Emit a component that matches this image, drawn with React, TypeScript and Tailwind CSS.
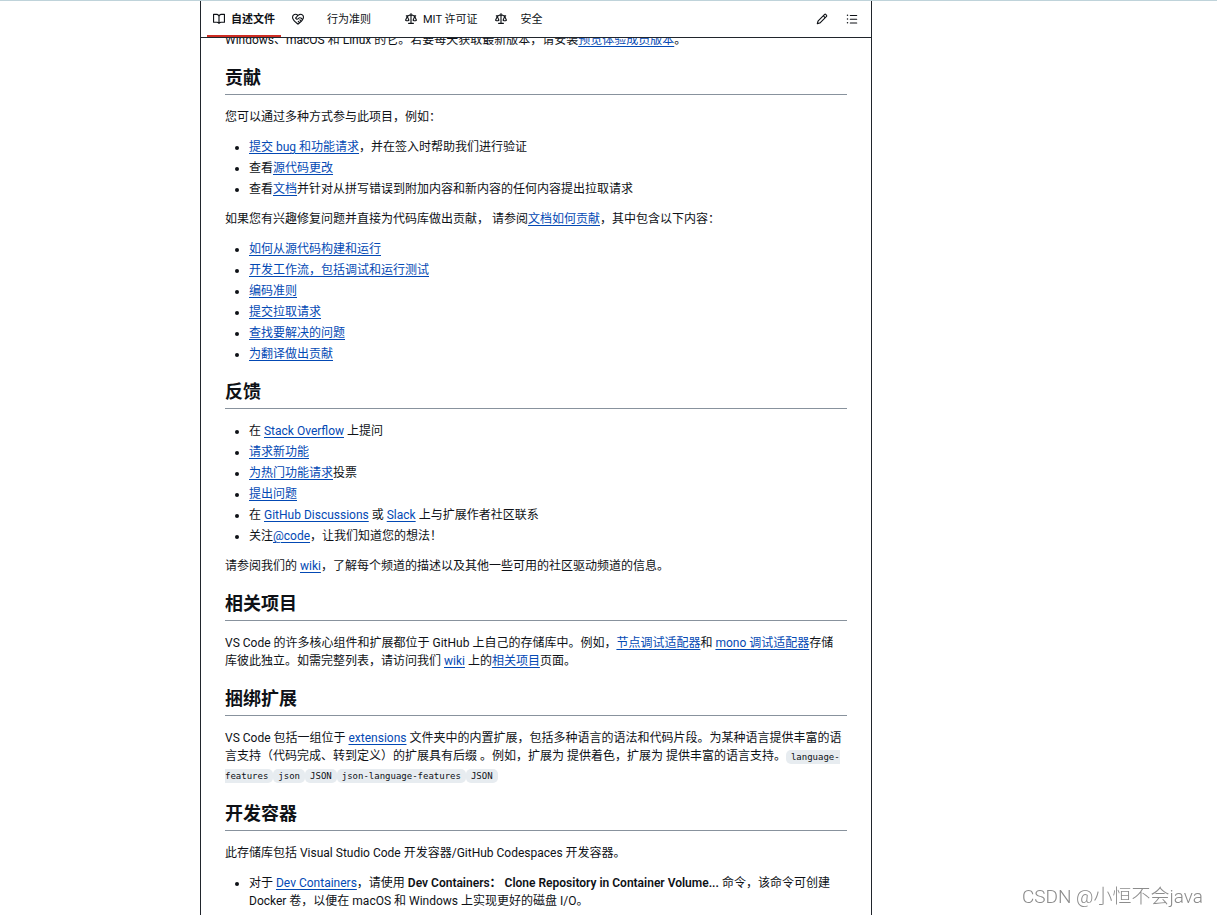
import type { ReactNode } from 'react';

const BOOK =
  'M0 1.75A.75.75 0 0 1 .75 1h4.253c1.227 0 2.317.59 3 1.501A3.743 3.743 0 0 1 11.006 1h4.245a.75.75 0 0 1 .75.75v10.5a.75.75 0 0 1-.75.75h-4.507a2.25 2.25 0 0 0-1.591.659l-.622.621a.75.75 0 0 1-1.06 0l-.622-.621A2.25 2.25 0 0 0 5.258 13H.75a.75.75 0 0 1-.75-.75Zm7.251 10.324.004-5.073-.002-2.253A2.25 2.25 0 0 0 5.003 2.5H1.5v9h3.757a3.75 3.75 0 0 1 1.994.574ZM8.755 4.75l-.004 7.322a3.752 3.752 0 0 1 1.992-.572H14.5v-9h-3.495a2.25 2.25 0 0 0-2.25 2.25Z';
const CONDUCT =
  'M8.048 2.241c.964-.709 2.079-1.238 3.325-1.241a4.616 4.616 0 0 1 3.282 1.355c.41.408.757.86.996 1.428.238.568.348 1.206.347 1.968 0 2.193-1.505 4.254-3.081 5.862-1.496 1.526-3.213 2.796-4.249 3.563l-.22.163a.749.749 0 0 1-.895 0l-.221-.163c-1.036-.767-2.753-2.037-4.249-3.563C1.51 10.008.007 7.952.002 5.762a4.614 4.614 0 0 1 1.353-3.407C3.123.585 6.223.537 8.048 2.24Zm-1.153.983c-1.25-1.033-3.321-.967-4.48.191a3.115 3.115 0 0 0-.913 2.335c0 1.556 1.109 3.24 2.652 4.813C5.463 11.898 6.96 13.032 8 13.805c.353-.262.758-.565 1.191-.905l-1.326-1.223a.75.75 0 0 1 1.018-1.102l1.48 1.366c.328-.281.659-.577.984-.887L9.99 9.802a.75.75 0 1 1 1.019-1.103l1.384 1.28c.295-.329.566-.661.81-.995L12.92 8.7l-1.167-1.168c-.674-.671-1.78-.664-2.474.03-.268.269-.538.537-.802.797-.893.882-2.319.843-3.185-.032-.346-.35-.693-.697-1.043-1.047a.75.75 0 0 1-.04-1.016c.162-.191.336-.401.52-.623.62-.748 1.356-1.637 2.166-2.417Zm7.112 4.442c.313-.65.491-1.293.491-1.916v-.001c0-.614-.088-1.045-.23-1.385-.143-.339-.357-.633-.673-.949a3.111 3.111 0 0 0-2.218-.915c-1.092.003-2.165.627-3.226 1.602-.823.755-1.554 1.637-2.228 2.45l-.127.154.562.566a.755.755 0 0 0 1.066.02l.794-.79c1.258-1.258 3.312-1.286 4.594-.03.4.393.795.795 1.195 1.194Z';
const LAW =
  'M8.75.75V2h.985c.304 0 .603.08.867.231l1.29.736c.038.022.08.033.124.033h2.234a.75.75 0 0 1 0 1.5h-.427l2.111 4.692a.75.75 0 0 1-.154.838l-.53-.53.529.531-.001.002-.002.002-.006.006-.006.005-.01.01-.045.04c-.21.176-.441.327-.686.45C14.556 10.78 13.88 11 13 11a4.498 4.498 0 0 1-2.023-.454 3.544 3.544 0 0 1-.686-.45l-.045-.04-.016-.015-.006-.006-.004-.004v-.001a.75.75 0 0 1-.154-.838L12.178 4.5h-.162c-.305 0-.604-.079-.868-.231l-1.29-.736a.245.245 0 0 0-.124-.033H8.75V13h2.5a.75.75 0 0 1 0 1.5h-6.5a.75.75 0 0 1 0-1.5h2.5V3.5h-.984a.245.245 0 0 0-.124.033l-1.289.737c-.265.15-.564.23-.869.23h-.162l2.112 4.692a.75.75 0 0 1-.154.838l-.53-.53.529.531-.001.002-.002.002-.006.006-.016.015-.045.04c-.21.176-.441.327-.686.45C4.556 10.78 3.88 11 3 11a4.498 4.498 0 0 1-2.023-.454 3.544 3.544 0 0 1-.686-.45l-.045-.04-.016-.015-.006-.006-.004-.004v-.001a.75.75 0 0 1-.154-.838L2.178 4.5H1.75a.75.75 0 0 1 0-1.5h2.234a.249.249 0 0 0 .125-.033l1.288-.737c.265-.15.564-.23.869-.23h.984V.75a.75.75 0 0 1 1.5 0Zm2.945 8.477c.285.135.718.273 1.305.273s1.02-.138 1.305-.273L13 6.327Zm-10 0c.285.135.718.273 1.305.273s1.02-.138 1.305-.273L3 6.327Z';
const PENCIL =
  'M11.013 1.427a1.75 1.75 0 0 1 2.474 0l1.086 1.086a1.75 1.75 0 0 1 0 2.474l-8.61 8.61c-.21.21-.47.364-.756.445l-3.251.93a.75.75 0 0 1-.927-.928l.929-3.25c.081-.286.235-.547.445-.758l8.61-8.61Zm.176 4.823L9.75 4.81l-6.286 6.287a.253.253 0 0 0-.064.108l-.558 1.953 1.953-.558a.253.253 0 0 0 .108-.064Zm1.238-3.763a.25.25 0 0 0-.354 0L10.811 3.75l1.439 1.44 1.263-1.263a.25.25 0 0 0 0-.354Z';
const LIST =
  'M5.75 2.5h8.5a.75.75 0 0 1 0 1.5h-8.5a.75.75 0 0 1 0-1.5Zm0 5h8.5a.75.75 0 0 1 0 1.5h-8.5a.75.75 0 0 1 0-1.5Zm0 5h8.5a.75.75 0 0 1 0 1.5h-8.5a.75.75 0 0 1 0-1.5ZM2 14a1 1 0 1 1 0-2 1 1 0 0 1 0 2Zm1-6a1 1 0 1 1-2 0 1 1 0 0 1 2 0ZM2 4a1 1 0 1 1 0-2 1 1 0 0 1 0 2Z';

function Icon({ d }: { d: string }) {
  return (
    <svg viewBox="0 0 16 16" className="size-3 shrink-0 fill-current" aria-hidden="true">
      <path d={d} />
    </svg>
  );
}

function Link({ children }: { children: ReactNode }) {
  return (
    <a href="#" className="text-[#0349b4] underline underline-offset-2">
      {children}
    </a>
  );
}

function Heading({ children }: { children: ReactNode }) {
  return (
    <h2 className="mt-[18px] mb-[13px] border-b border-[#88929d] pb-[5px] text-[18px] leading-[22px] font-bold">
      {children}
    </h2>
  );
}

function Paragraph({ children }: { children: ReactNode }) {
  return <p className="mb-3 pr-[3px]">{children}</p>;
}

function List({ children }: { children: ReactNode }) {
  return <ul className="mb-3 flex list-disc flex-col gap-[3px] pl-6 last:mb-0">{children}</ul>;
}

function Code({ children }: { children: ReactNode }) {
  return (
    <code className="rounded-[5px] bg-[#e7ecf0] px-[5px] py-[2px] font-['DejaVu_Sans_Mono','Liberation_Mono',monospace] text-[9px] leading-[18px]">
      {children}
    </code>
  );
}

function Tab({ icon, active, label, pad = '' }: { icon: ReactNode; active?: boolean; label: string; pad?: string }) {
  return (
    <a
      href="#"
      className={
        active
          ? 'flex items-center gap-[6px] border-b-2 border-[#cd2c22] px-[6px] pt-[2px] font-bold'
          : 'flex items-center gap-[6px] border-b-2 border-transparent px-[6px] pt-[2px]'
      }
    >
      {icon}
      <span className={`pt-[2px] ${pad}`}>{label}</span>
    </a>
  );
}

export default function App() {
  return (
    <div className="flex min-h-screen flex-col border-t border-[#bfd3da] bg-white font-[Roboto,'Noto_Sans_CJK_SC',sans-serif] text-[12px] leading-[18px] text-[#0e1116]">
      <main className="ml-[200px] max-w-[672px] flex-1 border-x border-[#20252c]">
        <header className="sticky top-0 z-10 flex h-[37px] justify-between border-b border-[#20252c] bg-white pr-[7px] pl-[6px]">
          <nav className="flex gap-[5px] text-[11px]" aria-label="存储库文件">
            <Tab icon={<Icon d={BOOK} />} label="自述文件" active />
            <Tab icon={<Icon d={CONDUCT} />} label="行为准则" pad="px-[17px]" />
            <Tab icon={<Icon d={LAW} />} label="MIT 许可证" />
            <Tab icon={<Icon d={LAW} />} label="安全" pad="px-2" />
          </nav>
          <div className="flex items-center gap-[6px]">
            <button type="button" aria-label="编辑" className="flex size-6 items-center justify-center">
              <Icon d={PENCIL} />
            </button>
            <button type="button" aria-label="大纲" className="flex size-6 items-center justify-center">
              <Icon d={LIST} />
            </button>
          </div>
        </header>

        <article className="-mt-[7px] px-6">
          <Paragraph>
            Windows、macOS 和 Linux 的它。若要每天获取最新版本，请安装<Link>预览体验成员版本</Link>。
          </Paragraph>

          <Heading>贡献</Heading>
          <Paragraph>您可以通过多种方式参与此项目，例如：</Paragraph>
          <List>
            <li>
              <Link>提交 bug 和功能请求</Link>，并在签入时帮助我们进行验证
            </li>
            <li>
              查看<Link>源代码更改</Link>
            </li>
            <li>
              查看<Link>文档</Link>并针对从拼写错误到附加内容和新内容的任何内容提出拉取请求
            </li>
          </List>
          <Paragraph>
            如果您有兴趣修复问题并直接为代码库做出贡献， 请参阅<Link>文档如何贡献</Link>，其中包含以下内容：
          </Paragraph>
          <List>
            <li><Link>如何从源代码构建和运行</Link></li>
            <li><Link>开发工作流，包括调试和运行测试</Link></li>
            <li><Link>编码准则</Link></li>
            <li><Link>提交拉取请求</Link></li>
            <li><Link>查找要解决的问题</Link></li>
            <li><Link>为翻译做出贡献</Link></li>
          </List>

          <Heading>反馈</Heading>
          <List>
            <li>
              在 <Link>Stack Overflow</Link> 上提问
            </li>
            <li><Link>请求新功能</Link></li>
            <li>
              <Link>为热门功能请求</Link>投票
            </li>
            <li><Link>提出问题</Link></li>
            <li>
              在 <Link>GitHub Discussions</Link> 或 <Link>Slack</Link> 上与扩展作者社区联系
            </li>
            <li>
              关注<Link>@code</Link>，让我们知道您的想法！
            </li>
          </List>
          <Paragraph>
            请参阅我们的 <Link>wiki</Link>，了解每个频道的描述以及其他一些可用的社区驱动频道的信息。
          </Paragraph>

          <Heading>相关项目</Heading>
          <Paragraph>
            VS Code 的许多核心组件和扩展都位于 GitHub 上自己的存储库中。例如，<Link>节点调试适配器</Link>和{' '}
            <Link>mono 调试适配器</Link>存储库彼此独立。如需完整列表，请访问我们 <Link>wiki</Link> 上的
            <Link>相关项目</Link>页面。
          </Paragraph>

          <Heading>捆绑扩展</Heading>
          <Paragraph>
            VS Code 包括一组位于 <Link>extensions</Link>{' '}
            文件夹中的内置扩展，包括多种语言的语法和代码片段。为某种语言提供丰富的语言支持（代码完成、转到定义）的扩展具有后缀
            。例如，扩展为 提供着色，扩展为 提供丰富的语言支持。<Code>language-features</Code>
            <Code>json</Code>
            <Code>JSON</Code>
            <Code>json-language-features</Code>
            <Code>JSON</Code>
          </Paragraph>

          <Heading>开发容器</Heading>
          <Paragraph>此存储库包括 Visual Studio Code 开发容器/GitHub Codespaces 开发容器。</Paragraph>
          <List>
            <li>
              对于 <Link>Dev Containers</Link>，请使用{' '}
              <strong className="font-semibold">Dev Containers： Clone Repository in Container Volume...</strong>{' '}
              命令，该命令可创建 Docker 卷，以便在 macOS 和 Windows 上实现更好的磁盘 I/O。
            </li>
          </List>
        </article>
      </main>

      <div className="fixed right-[14px] bottom-1 font-[Roboto,'Noto_Sans_CJK_SC',sans-serif] text-[19px] leading-7 font-light text-[#8c8c8c]">
        CSDN @小恒不会java
      </div>
    </div>
  );
}
